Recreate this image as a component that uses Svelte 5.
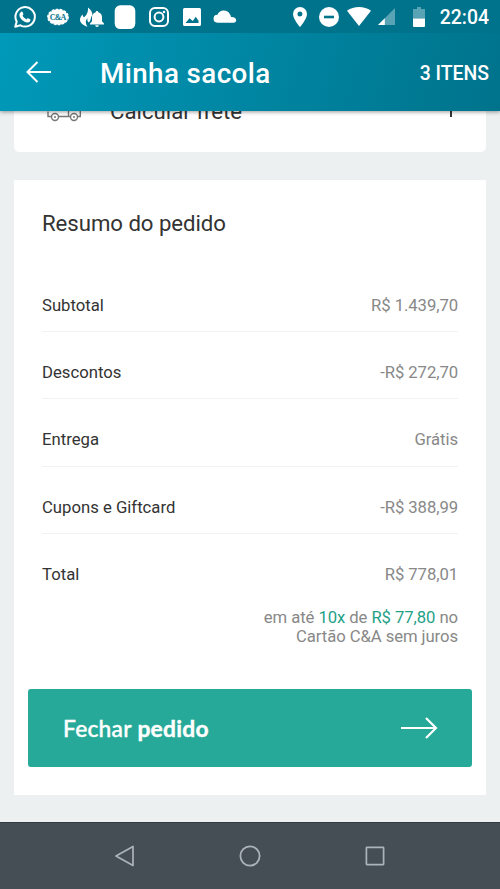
<script>
	const title = 'Minha sacola';
	const itemCount = 3;

	const summary = [
		{ label: 'Subtotal', value: 'R$ 1.439,70' },
		{ label: 'Descontos', value: '-R$ 272,70' },
		{ label: 'Entrega', value: 'Grátis' },
		{ label: 'Cupons e Giftcard', value: '-R$ 388,99' },
		{ label: 'Total', value: 'R$ 778,01' }
	];
</script>

<div class="screen">
	<div class="status-bar">
		<div class="notifications">
			<!-- WhatsApp -->
			<svg viewBox="0 0 24 24">
				<path d="M2.2 21.8l1.5-5.2A9.7 9.7 0 1 1 7.4 20.3z" fill="none" stroke="#fff" stroke-width="2" stroke-linejoin="round" />
				<path d="M8.5 6.6c.5-.2.9 0 1.1.4l.8 1.9c.1.4 0 .7-.9 1.7.9 1.8 2.2 3 4 3.8.9-1.1 1.2-1.3 1.600-1.100l2 1c.5.3.4.8.2 1.500-.4 1.200-1.800 1.900-3 1.800-3.600-.5-7-3.800-7.800-6.600-.4-1.700.7-3.900 2-4.400z" fill="#fff" />
			</svg>
			<!-- C&A badge -->
			<svg viewBox="0 0 24 24">
				<ellipse cx="12" cy="12" rx="10.2" ry="7.6" fill="#fff" />
				<ellipse cx="12" cy="12" rx="10.2" ry="7.6" fill="none" stroke="#fff" stroke-width="1.4" stroke-linecap="round" stroke-dasharray="1.8 2.2" />
				<text class="badge-text" x="11.7" y="14.7" text-anchor="middle">C&amp;A</text>
			</svg>
			<!-- Flame and bell -->
			<svg viewBox="0 0 24 24">
				<path d="M8 2.5c2.8 2.2 4.600 4.700 4.300 7.800-1.700 1.700-1.200 5.200-3.500 7.200-1.500-1.300-1.700-2.600-1.200-4.200-2 1.800-2.500 4.600-.2 8.500C3.400 20.500 0 18.200 0 14.800c0-2.300 1.300-4 2.700-5.300 0 1.300.4 2.200 1.400 2.800C7.400 9.500 8.300 6.500 8 2.500z" fill="#fff" />
				<path d="M17 6c.8 0 1.300.5 1.300 1.300 2.400.7 3.700 2.600 3.700 5v4l2 2.200v1H10v-1l2-2.200v-4c0-2.400 1.300-4.300 3.700-5C15.700 6.500 16.200 6 17 6zM15.200 20.300h3.600a1.800 1.800 0 0 1-3.600 0z" fill="#fff" />
			</svg>
			<!-- App tile -->
			<svg viewBox="0 0 24 24">
				<rect x="1.7" y="0.3" width="20.6" height="23.7" rx="5.5" fill="#fff" />
			</svg>
			<!-- Instagram -->
			<svg viewBox="0 0 24 24">
				<rect x="3" y="3" width="18" height="18" rx="5" fill="none" stroke="#fff" stroke-width="2" />
				<circle cx="12" cy="12" r="4.4" fill="none" stroke="#fff" stroke-width="2" />
				<circle cx="17" cy="7" r="1.3" fill="#fff" />
			</svg>
			<!-- Picture -->
			<svg viewBox="0 0 24 24">
				<path fill-rule="evenodd" d="M4.500 3h15A1.500 1.500 0 0 1 21 4.500v15a1.500 1.500 0 0 1-1.500 1.500h-15A1.500 1.500 0 0 1 3 19.500v-15A1.500 1.500 0 0 1 4.500 3zM5.500 18h13v-2.200l-2.700-4.100-3 4.200-3.300-2.600z" fill="#fff" />
			</svg>
			<!-- Cloud -->
			<svg viewBox="0 0 24 24">
				<path d="M4.700 17.700a4 4 0 0 1-.3-8A6.900 6.900 0 0 1 16.900 9.200c.7.9 1 1.800 1.100 2.900 3.300-.2 5.200 1.200 5.200 3.100 0 1.500-1.100 2.500-2.500 2.500z" fill="#fff" />
			</svg>
		</div>

		<div class="system">
			<svg class="pin" viewBox="0 0 14 20">
				<path fill-rule="evenodd" d="M7 0a7 7 0 0 1 7 7c0 5-7 13-7 13S0 12 0 7a7 7 0 0 1 7-7zM7 4.500a2.500 2.500 0 1 0 0 5 2.500 2.500 0 0 0 0-5z" fill="#fff" />
			</svg>
			<svg class="dnd" viewBox="0 0 20 20">
				<circle cx="10" cy="10" r="10" fill="#fff" />
				<path d="M5 10h10" stroke="#00738c" stroke-width="2.6" />
			</svg>
			<svg class="wifi" viewBox="0 0 24 19">
				<path d="M0 3.8C7 -1.200 17 -1.200 24 3.800L12 19z" fill="#fff" />
			</svg>
			<svg class="signal" viewBox="0 0 17 17">
				<path d="M17 0v17H0z" fill="#fff" fill-opacity="0.35" />
				<path d="M6.8 10.2V17H0z" fill="#fff" />
			</svg>
			<svg class="battery" viewBox="0 0 12 20">
				<path d="M4 0h4v2h4v9.500H0V2h4z" fill="#fff" fill-opacity="0.35" />
				<path d="M0 11.500h12V19a1 1 0 0 1-1 1H1a1 1 0 0 1-1-1z" fill="#fff" />
			</svg>
			<span class="clock">22:04</span>
		</div>
	</div>

	<header class="app-bar">
		<svg class="back" viewBox="0 0 26 22">
			<path d="M25 11H1.500M11.500 1L1.500 11l10 10" fill="none" stroke="#fff" stroke-width="2" />
		</svg>
		<h1>{title}</h1>
		<span class="count">{itemCount} ITENS</span>
	</header>

	<main>
		<section class="card shipping">
			<svg class="truck" viewBox="0 0 36 28">
				<g fill="none" stroke="#777" stroke-width="1.4">
					<path d="M5.500 22.500H2V17.500M0 8h9M2 13h7M12.500 22.500h11.500M31.500 22.500H34.300V13l-4-6H23M22.500 3v19M22.500 3H6" />
					<circle cx="9" cy="23" r="3.5" />
					<circle cx="28" cy="23" r="3.5" />
				</g>
				<circle cx="9" cy="23" r="1" fill="#777" />
				<circle cx="28" cy="23" r="1" fill="#777" />
			</svg>
			<span class="shipping-label">Calcular frete</span>
			<svg class="plus" viewBox="0 0 14 14">
				<path d="M7 0v14M0 7h14" stroke="#222" stroke-width="1.8" />
			</svg>
		</section>

		<section class="card summary">
			<h2>Resumo do pedido</h2>

			<div class="rows">
				{#each summary as row}
					<div class="row">
						<span class="label">{row.label}</span>
						<span class="value">{row.value}</span>
					</div>
				{/each}
			</div>

			<p class="installments">
				em até <em>10x</em> de <em>R$ 77,80</em> no<br />
				Cartão C&amp;A sem juros
			</p>

			<button class="checkout">
				<span>Fechar <b>pedido</b></span>
				<svg viewBox="0 0 38 22">
					<path d="M1 11h34.500M26 1l10 10-10 10" fill="none" stroke="#fff" stroke-width="2.2" />
				</svg>
			</button>
		</section>
	</main>

	<nav class="nav-bar">
		<svg viewBox="0 0 24 24">
			<path d="M20 2.500v19L3 12z" fill="none" stroke="#adb3bb" stroke-width="1.7" stroke-linejoin="round" />
		</svg>
		<svg viewBox="0 0 24 24">
			<circle cx="12" cy="12" r="9.600" fill="none" stroke="#adb3bb" stroke-width="1.8" />
		</svg>
		<svg viewBox="0 0 24 24">
			<rect x="3.4" y="3.4" width="17.2" height="17.2" rx="0.5" fill="none" stroke="#adb3bb" stroke-width="1.7" />
		</svg>
	</nav>
</div>

<style>
	:global(body) {
		background: #ecf0f1;
	}

	.screen {
		display: flex;
		flex-direction: column;
		height: 889px;
		overflow: hidden;
		background: #ecf0f1;
		font-family: Roboto, 'Liberation Sans', sans-serif;
		color: #333;
	}

	svg {
		display: block;
		flex: none;
	}

	.status-bar {
		display: flex;
		align-items: center;
		justify-content: space-between;
		position: relative;
		z-index: 2;
		flex: none;
		height: 33px;
		padding: 0 11px 0 13px;
		background: #00738c;
	}

	.notifications {
		display: flex;
		gap: 9.4px;
	}

	.notifications svg {
		width: 24px;
		height: 24px;
	}

	.badge-text {
		font: bold 8px 'Liberation Serif', serif;
		letter-spacing: -0.8px;
		fill: #00738c;
	}

	.system {
		display: flex;
		align-items: center;
	}

	.pin {
		width: 14px;
		height: 20px;
		margin-right: 12px;
	}

	.dnd {
		width: 20px;
		height: 20px;
		margin-right: 8px;
	}

	.wifi {
		width: 24px;
		height: 19px;
		margin-right: 7px;
	}

	.signal {
		width: 17px;
		height: 17px;
		margin-right: 18px;
	}

	.battery {
		width: 12px;
		height: 20px;
		margin-right: 15px;
	}

	.clock {
		padding-top: 2px;
		color: #fff;
		font-size: 19.4px;
		font-weight: 500;
		line-height: 24px;
	}

	.app-bar {
		display: flex;
		align-items: center;
		position: relative;
		z-index: 1;
		flex: none;
		height: 78px;
		box-sizing: border-box;
		padding: 0 11px 0 26px;
		background: linear-gradient(105deg, #0099b9, #00738c);
		box-shadow: 0 1px 4px rgba(0, 0, 0, 0.4);
		color: #fff;
	}

	.back {
		width: 26px;
		height: 22px;
	}

	h1 {
		flex: 1;
		margin: 0 0 0 48px;
		padding-top: 2px;
		font-size: 27.8px;
		font-weight: 500;
		letter-spacing: 0.4px;
	}

	.count {
		padding-top: 2px;
		font-size: 19.4px;
		font-weight: 500;
	}

	main {
		display: flex;
		flex: 1;
		flex-direction: column;
		gap: 28px;
		padding: 0 14px;
	}

	.card {
		background: #fff;
	}

	/* Scrolled halfway under the app bar */
	.shipping {
		display: flex;
		align-items: center;
		height: 82px;
		box-sizing: border-box;
		margin-top: -41px;
		padding: 0 28px 0 32px;
		border-radius: 5px;
	}

	.truck {
		width: 36px;
		height: 28px;
		margin-top: -6px;
	}

	.shipping-label {
		flex: 1;
		margin-left: 28px;
		font-size: 22.2px;
	}

	.plus {
		width: 14px;
		height: 14px;
		margin-top: -3px;
	}

	.summary {
		height: 615px;
		box-sizing: border-box;
		padding: 27px 14px;
	}

	h2 {
		margin: 0 14px;
		font-size: 22.2px;
		font-weight: 400;
		line-height: 32px;
		letter-spacing: -0.05px;
	}

	.rows {
		margin: 26px 14px 0;
	}

	.row {
		display: flex;
		align-items: center;
		justify-content: space-between;
		height: 67.2px;
		box-sizing: border-box;
		border-bottom: 1.4px solid #f1f2f3;
		padding-top: 16px;
		font-size: 16.7px;
		line-height: 20px;
	}

	.row:last-child {
		border-bottom-color: transparent;
	}

	.value,
	.installments {
		color: #888;
		letter-spacing: -0.08px;
	}

	.installments {
		margin: 7px 14px 0;
		font-size: 16.7px;
		line-height: 19.5px;
		text-align: right;
	}

	em {
		color: #1fa187;
		font-style: normal;
	}

	.checkout {
		display: flex;
		align-items: center;
		justify-content: space-between;
		width: 100%;
		height: 78px;
		margin-top: 42px;
		border: 0;
		border-radius: 3px;
		padding: 0 34px 0 35px;
		background: #26a998;
		color: #fff;
		font-family: Lato, 'Open Sans', sans-serif;
		font-size: 22.8px;
		font-weight: 500;
		letter-spacing: 0.25px;
		-webkit-text-stroke: 0.4px #fff;
	}

	.checkout b {
		font-weight: 700;
	}

	.checkout svg {
		width: 38px;
		height: 22px;
	}

	.nav-bar {
		display: flex;
		align-items: center;
		justify-content: center;
		gap: 101px;
		flex: none;
		height: 67px;
		box-sizing: border-box;
		border-top: 1px solid #343a41;
		background: #454d55;
	}

	.nav-bar svg {
		width: 24px;
		height: 24px;
	}
</style>
